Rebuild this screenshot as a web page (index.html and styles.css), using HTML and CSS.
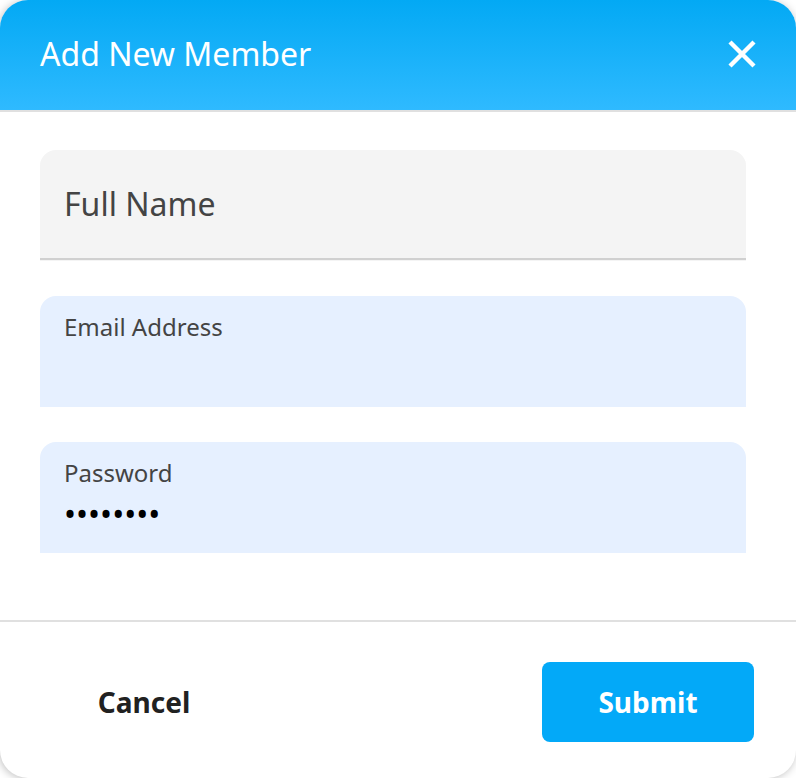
FILE: index.html
```html
<!DOCTYPE html>
<html lang="en">
<head>
<meta charset="utf-8">
<title>Add New Member</title>
<link rel="stylesheet" href="styles.css">
</head>
<body>
<form class="dialog" role="dialog" aria-labelledby="dialog-title">
  <header class="dialog-header">
    <h1 class="dialog-title" id="dialog-title">Add New Member</h1>
    <button class="close" type="button" aria-label="Close">
      <svg width="28" height="28" viewBox="0 0 28 28" aria-hidden="true">
        <path d="M2 2 26 26M26 2 2 26" fill="none" stroke="#fff" stroke-width="4.4"/>
      </svg>
    </button>
  </header>
  <div class="dialog-body">
    <div class="field field-resting">
      <label class="label" for="full-name">Full Name</label>
      <input class="input" id="full-name" type="text">
    </div>
    <div class="field field-filled">
      <label class="label" for="email">Email Address</label>
      <input class="input" id="email" type="email">
    </div>
    <div class="field field-filled">
      <label class="label" for="password">Password</label>
      <input class="input" id="password" type="password" value="password">
    </div>
  </div>
  <footer class="dialog-footer">
    <button class="button button-plain" type="button">Cancel</button>
    <button class="button button-primary" type="submit">Submit</button>
  </footer>
</form>
</body>
</html>
```
FILE: styles.css
```css
* {
  box-sizing: border-box;
}

body {
  margin: 0;
  background: #fff;
  font-family: "Noto Sans", "Open Sans", sans-serif;
}

.dialog {
  display: flex;
  flex-direction: column;
  min-height: 100vh;
  border-radius: 28px;
  overflow: hidden;
  background: #fff;
  box-shadow: -1px 1px 8px rgba(0, 0, 0, 0.25);
}

.dialog-header {
  display: flex;
  align-items: center;
  justify-content: space-between;
  padding: 29px 40px 31px;
  border-bottom: 2px solid #e0e0e0;
  background: linear-gradient(#03a9f4, #2fbaff) padding-box;
}

.dialog-title {
  margin: 0;
  color: #fff;
  font-size: 32px;
  font-weight: 400;
  line-height: 50px;
}

.close {
  display: flex;
  padding: 0;
  border: 0;
  background: none;
}

.dialog-body {
  display: flex;
  flex: 1;
  flex-direction: column;
  gap: 35px;
  padding: 38px 50px 67px 40px;
}

.field {
  display: grid;
  height: 111px;
  padding: 0 24px;
  border-radius: 16px 16px 0 0;
}

.field-resting {
  align-items: center;
  padding-bottom: 3px;
  background: #f4f4f4;
  box-shadow: inset 0 -1px #f4f4f4, inset 0 -3px #d0d0d0;
}

.field-resting .label,
.field-resting .input {
  grid-area: 1 / 1;
}

.field-filled {
  grid-template-rows: 32px 48px;
  padding-top: 15px;
  background: #e6f0ff;
}

.label {
  color: #444;
  font-size: 24px;
  line-height: 32px;
}

.field-resting .label {
  font-size: 32px;
}

.input {
  width: 100%;
  height: 48px;
  padding: 0;
  border: 0;
  outline: 0;
  background: none;
  color: #000;
  font: 32px "Noto Sans", "Open Sans", sans-serif;
}

.dialog-footer {
  display: flex;
  justify-content: space-between;
  padding: 40px 42px 36px 38px;
  border-top: 2px solid #e0e0e0;
}

.button {
  width: 212px;
  height: 80px;
  border: 0;
  border-radius: 8px;
  font: 700 28px "Noto Sans", "Open Sans", sans-serif;
}

.button-plain {
  background: none;
  color: #212121;
}

.button-primary {
  background: #03a9f8;
  color: #fff;
}
```
